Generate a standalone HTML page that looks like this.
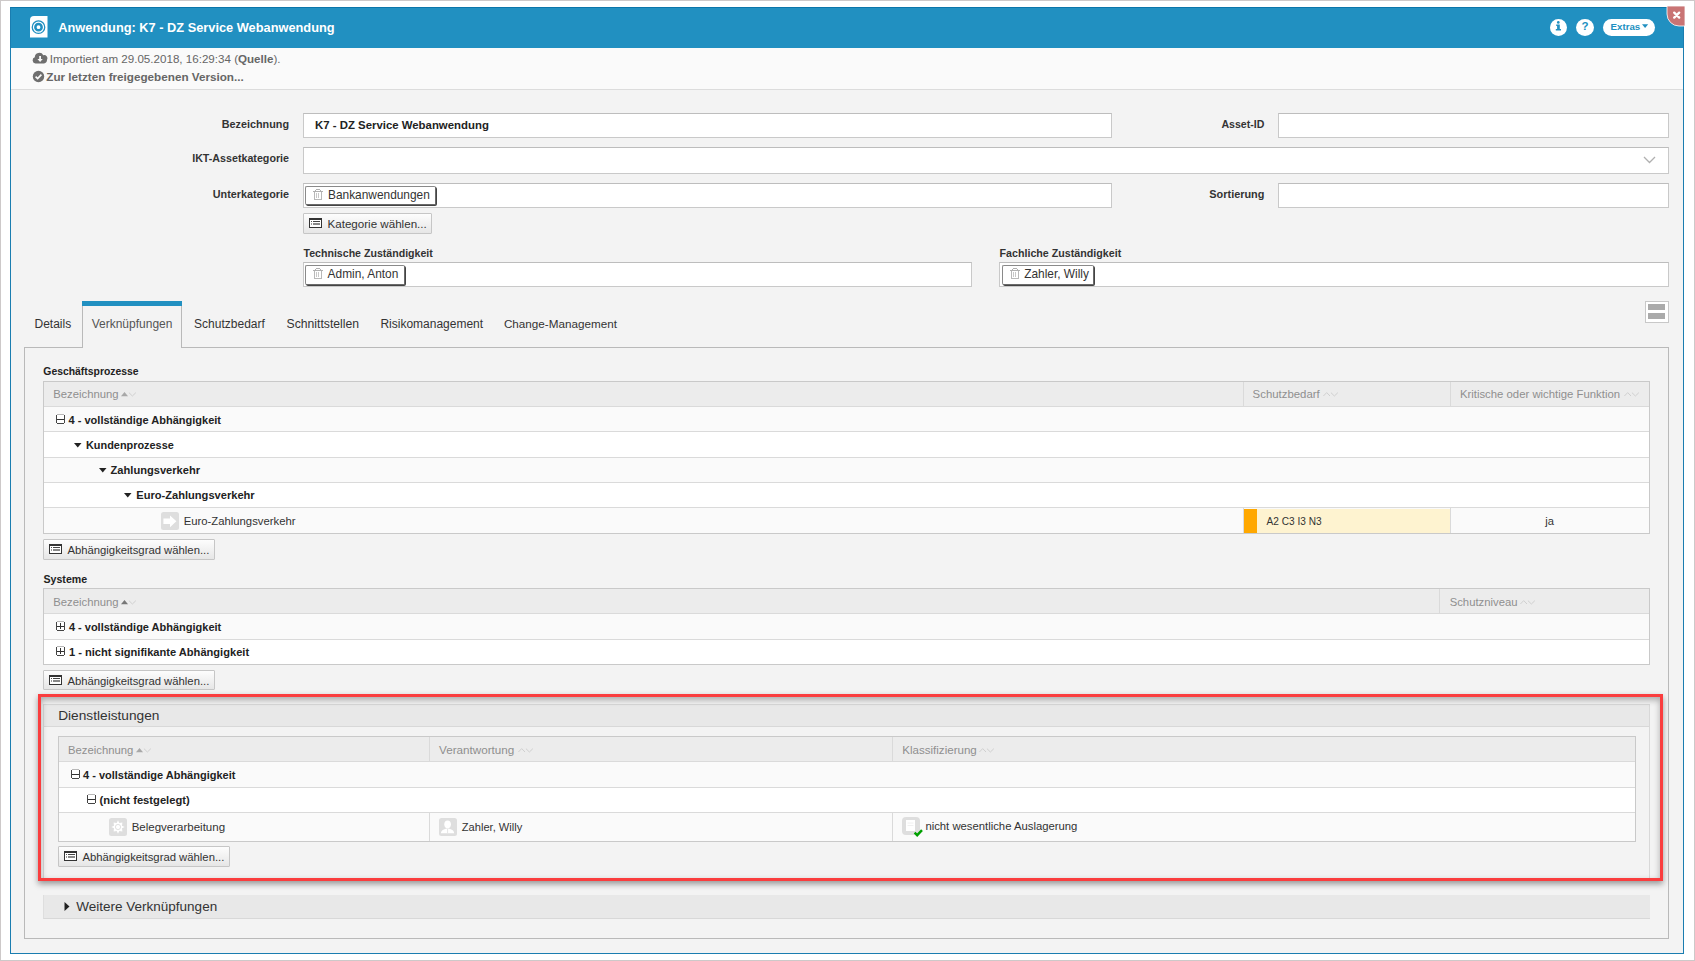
<!DOCTYPE html><html><head><meta charset="utf-8"><style>
*{margin:0;padding:0}
html,body{width:1695px;height:961px;overflow:hidden;background:#fff}
body{position:relative;font-family:"Liberation Sans",sans-serif}
body>div,body>svg{position:absolute;box-sizing:border-box}
.t{white-space:nowrap;line-height:normal}
.circ{width:18px;height:18px;border-radius:50%;background:#fff;color:#2190c1;font-weight:bold;font-size:12px;line-height:18px;text-align:center}
</style></head><body>
<div style="left:0px;top:0px;width:1695px;height:961px;border:1px solid #cdc9c9;background:#fff;"></div>
<div style="left:10px;top:7px;width:1674px;height:947px;border:1px solid #1a7db0;background:#f3f3f3;"></div>
<div style="left:10px;top:7px;width:1674px;height:41px;background:#2190c1;border-top:1px solid #0b76aa;border-left:1px solid #1a7db0;border-right:1px solid #1a7db0;"></div>
<svg style="left:30px;top:16px" width="18" height="22" viewBox="0 0 18 22">
<path d="M4 0 H17.5 V21.5 H0 V4 A4 4 0 0 1 4 0 Z" fill="#fff"/>
<circle cx="8.5" cy="11.2" r="6.25" fill="none" stroke="#2190c1" stroke-width="1.3"/>
<circle cx="8.5" cy="11.2" r="3.15" fill="none" stroke="#2190c1" stroke-width="2.5"/>
</svg>
<div class="t" style="left:58.3px;top:20px;font-size:12.8px;font-weight:bold;color:#fff;">Anwendung: K7 - DZ Service Webanwendung</div>
<svg style="left:1550px;top:19px" width="17" height="17" viewBox="0 0 17 17"><circle cx="8.5" cy="8.5" r="8.5" fill="#fff"/>
<circle cx="8.3" cy="3.4" r="1.35" fill="#2190c1"/><path d="M6.2 5.6 H9.8 V10.1 H11 V11.5 H5.8 V10.1 H7.1 V6.9 H6.2 Z" fill="#2190c1"/></svg>
<div class="circ" style="left:1576px;top:19px;width:18px;height:17px;line-height:15px;font-size:11.5px;">?</div>
<div style="left:1603px;top:19px;width:52px;height:17px;border-radius:8.5px;background:#fff;"></div>
<div class="t" style="left:1610.6px;top:21px;font-size:9.7px;font-weight:bold;color:#2190c1;">Extras</div>
<svg style="left:1642px;top:24px" width="7" height="5"><path d="M0 0.3 H6.2 L3.1 4 Z" fill="#2190c1"/></svg>
<svg style="left:1666px;top:5px" width="20" height="22" viewBox="0 0 20 22">
<path d="M1 1 H19 V21 H13 A12 12 0 0 1 1 9 Z" fill="#c97474" stroke="#fff" stroke-width="0.8"/>
<path d="M8.2 7.6 L13.2 12.6 M13.2 7.6 L8.2 12.6" stroke="#fff" stroke-width="2.3" stroke-linecap="round"/>
</svg>
<div style="left:11px;top:48px;width:1672px;height:42px;background:#fafafa;border-bottom:1px solid #dcdcdc;"></div>
<svg style="left:32px;top:52px" width="16" height="12" viewBox="0 0 16 12">
<path d="M3.5 11.5 A3.2 3.2 0 0 1 2.8 5.3 A4.5 4.5 0 0 1 11.3 3.2 A3.2 3.2 0 0 1 15 7.8 A3.6 3.6 0 0 1 12 11.5 Z" fill="#6f6f6f"/>
<path d="M7.2 4 H9 V7 H10.8 L8.1 10 L5.4 7 H7.2 Z" fill="#fafafa"/>
</svg>
<div class="t" style="left:49.8px;top:52px;font-size:11.6px;color:#666;">Importiert am 29.05.2018, 16:29:34 (<b>Quelle</b>).</div>
<svg style="left:32px;top:70px" width="13" height="13" viewBox="0 0 13 13">
<circle cx="6.5" cy="6.5" r="5.7" fill="#6f6f6f"/>
<path d="M3.6 6.6 L5.6 8.5 L9.4 4.6" fill="none" stroke="#fafafa" stroke-width="1.7"/>
</svg>
<div class="t" style="left:46.3px;top:70px;font-size:11.7px;font-weight:bold;color:#666;">Zur letzten freigegebenen Version...</div>
<div class="t" style="right:1406px;top:118px;font-size:10.8px;font-weight:bold;color:#333;">Bezeichnung</div>
<div style="left:303px;top:113px;width:809px;height:25px;background:#fff;border:1px solid #c9c9c9;border-top-color:#bdbdbd;"></div>
<div class="t" style="left:315px;top:119px;font-size:11.4px;font-weight:bold;color:#222;">K7 - DZ Service Webanwendung</div>
<div class="t" style="right:430.5999999999999px;top:118px;font-size:10.6px;font-weight:bold;color:#333;">Asset-ID</div>
<div style="left:1278px;top:113px;width:391px;height:25px;background:#fff;border:1px solid #c9c9c9;border-top-color:#bdbdbd;"></div>
<div class="t" style="right:1406px;top:152px;font-size:10.7px;font-weight:bold;color:#333;">IKT-Assetkategorie</div>
<div style="left:303px;top:147px;width:1366px;height:27px;background:#fff;border:1px solid #c9c9c9;border-top-color:#bdbdbd;"></div>
<svg style="left:1643px;top:156px" width="13" height="8"><path d="M1 1 L6.5 6.5 L12 1" fill="none" stroke="#b0b0b0" stroke-width="1.3"/></svg>
<div class="t" style="right:1406px;top:188px;font-size:10.8px;font-weight:bold;color:#333;">Unterkategorie</div>
<div style="left:303px;top:183px;width:809px;height:25px;background:#fff;border:1px solid #c9c9c9;border-top-color:#bdbdbd;"></div>
<div class="t" style="right:430.5999999999999px;top:188px;font-size:10.9px;font-weight:bold;color:#333;">Sortierung</div>
<div style="left:1278px;top:183px;width:391px;height:25px;background:#fff;border:1px solid #c9c9c9;border-top-color:#bdbdbd;"></div>
<div style="left:305px;top:186px;width:131px;height:19px;background:#fff;border:1px solid #6a6a6a;border-top-color:#8a8a8a;border-left-color:#8a8a8a;border-radius:2px;box-shadow:1px 1px 0 #444;"></div>
<svg style="left:313px;top:189px" width="10" height="11" viewBox="0 0 10 11" shape-rendering="crispEdges">
<rect x="3" y="0" width="4" height="1" fill="#b0b0b0"/>
<rect x="2" y="1" width="1" height="1" fill="#b0b0b0"/><rect x="7" y="1" width="1" height="1" fill="#b0b0b0"/>
<rect x="0" y="2" width="10" height="1" fill="#b0b0b0"/>
<rect x="1" y="3" width="1" height="8" fill="#b8b8b8"/><rect x="8" y="3" width="1" height="8" fill="#b8b8b8"/>
<rect x="1" y="10" width="8" height="1" fill="#b8b8b8"/>
<rect x="3" y="4" width="1" height="5" fill="#c8c8c8"/><rect x="5" y="4" width="1" height="5" fill="#c8c8c8"/>
</svg>
<div class="t" style="left:328px;top:188px;font-size:11.9px;color:#333;">Bankanwendungen</div>
<div style="left:303px;top:213px;width:129px;height:21px;background:linear-gradient(#fdfdfd,#e6e6e6);border:1px solid #c6c6c6;border-radius:1px;"></div>
<svg style="left:309px;top:218px" width="13" height="10" viewBox="0 0 13 10" shape-rendering="crispEdges">
<rect x="0" y="0" width="13" height="10" fill="#333"/>
<rect x="1" y="2" width="11" height="7" fill="#fff"/>
<rect x="2" y="3" width="1" height="1" fill="#555"/><rect x="4" y="3" width="7" height="1" fill="#444"/>
<rect x="2" y="5" width="1" height="2" fill="#999"/><rect x="4" y="5" width="7" height="2" fill="#888"/>
</svg>
<div class="t" style="left:327.5px;top:217px;font-size:11.6px;color:#333;">Kategorie wählen...</div>
<div class="t" style="left:303.5px;top:247px;font-size:10.6px;font-weight:bold;color:#333;">Technische Zuständigkeit</div>
<div style="left:303px;top:262px;width:669px;height:25px;background:#fff;border:1px solid #c9c9c9;border-top-color:#bdbdbd;"></div>
<div style="left:305px;top:265px;width:100px;height:20px;background:#fff;border:1px solid #6a6a6a;border-top-color:#8a8a8a;border-left-color:#8a8a8a;border-radius:2px;box-shadow:1px 1px 0 #444;"></div>
<svg style="left:313px;top:268px" width="10" height="11" viewBox="0 0 10 11" shape-rendering="crispEdges">
<rect x="3" y="0" width="4" height="1" fill="#b0b0b0"/>
<rect x="2" y="1" width="1" height="1" fill="#b0b0b0"/><rect x="7" y="1" width="1" height="1" fill="#b0b0b0"/>
<rect x="0" y="2" width="10" height="1" fill="#b0b0b0"/>
<rect x="1" y="3" width="1" height="8" fill="#b8b8b8"/><rect x="8" y="3" width="1" height="8" fill="#b8b8b8"/>
<rect x="1" y="10" width="8" height="1" fill="#b8b8b8"/>
<rect x="3" y="4" width="1" height="5" fill="#c8c8c8"/><rect x="5" y="4" width="1" height="5" fill="#c8c8c8"/>
</svg>
<div class="t" style="left:327.6px;top:267px;font-size:11.9px;color:#333;">Admin, Anton</div>
<div class="t" style="left:999.5px;top:247px;font-size:10.7px;font-weight:bold;color:#333;">Fachliche Zuständigkeit</div>
<div style="left:999px;top:262px;width:670px;height:25px;background:#fff;border:1px solid #c9c9c9;border-top-color:#bdbdbd;"></div>
<div style="left:1002px;top:265px;width:92px;height:20px;background:#fff;border:1px solid #6a6a6a;border-top-color:#8a8a8a;border-left-color:#8a8a8a;border-radius:2px;box-shadow:1px 1px 0 #444;"></div>
<svg style="left:1010px;top:268px" width="10" height="11" viewBox="0 0 10 11" shape-rendering="crispEdges">
<rect x="3" y="0" width="4" height="1" fill="#b0b0b0"/>
<rect x="2" y="1" width="1" height="1" fill="#b0b0b0"/><rect x="7" y="1" width="1" height="1" fill="#b0b0b0"/>
<rect x="0" y="2" width="10" height="1" fill="#b0b0b0"/>
<rect x="1" y="3" width="1" height="8" fill="#b8b8b8"/><rect x="8" y="3" width="1" height="8" fill="#b8b8b8"/>
<rect x="1" y="10" width="8" height="1" fill="#b8b8b8"/>
<rect x="3" y="4" width="1" height="5" fill="#c8c8c8"/><rect x="5" y="4" width="1" height="5" fill="#c8c8c8"/>
</svg>
<div class="t" style="left:1024.2px;top:267px;font-size:11.9px;color:#333;">Zahler, Willy</div>
<div style="left:24px;top:347px;width:1645px;height:592px;border:1px solid #b9b9b9;"></div>
<div style="left:82px;top:301px;width:100px;height:47px;border:1px solid #b9b9b9;border-bottom:none;background:#f3f3f3;"></div>
<div style="left:82px;top:301px;width:100px;height:5px;background:#2190c1;"></div>
<div class="t" style="left:34.5px;top:317px;font-size:12.0px;color:#333;">Details</div>
<div class="t" style="left:91.7px;top:317px;font-size:12.0px;color:#555;">Verknüpfungen</div>
<div class="t" style="left:194.1px;top:317px;font-size:12.0px;color:#333;">Schutzbedarf</div>
<div class="t" style="left:286.6px;top:317px;font-size:12.2px;color:#333;">Schnittstellen</div>
<div class="t" style="left:380.4px;top:317px;font-size:12.0px;color:#333;">Risikomanagement</div>
<div class="t" style="left:503.9px;top:317px;font-size:11.7px;color:#333;">Change-Management</div>
<div style="left:1645px;top:301px;width:24px;height:22px;background:#fff;border:1px solid #c8c8c8;"></div>
<div style="left:1648px;top:304px;width:17px;height:6px;background:#aaa;"></div>
<div style="left:1648px;top:313px;width:17px;height:6px;background:#aaa;"></div>
<div class="t" style="left:43.3px;top:366px;font-size:10.4px;font-weight:bold;color:#222;">Geschäftsprozesse</div>
<div style="left:43px;top:381px;width:1607px;height:153px;border:1px solid #c9c9c9;background:#fafafa;"></div>
<div style="left:44px;top:382px;width:1605px;height:25px;background:#ececec;border-bottom:1px solid #dadada;"></div>
<div style="left:1243px;top:382px;width:1px;height:25px;background:#dadada;"></div>
<div style="left:1450px;top:382px;width:1px;height:25px;background:#dadada;"></div>
<div class="t" style="left:53.3px;top:388px;font-size:11.3px;color:#8f8f8f;">Bezeichnung</div>
<svg style="left:121px;top:392px" width="16" height="6"><path d="M0 4.2 L3.5 0 L7 4.2 Z" fill="#a8a8a8"/><path d="M7.9 0.6 L11.4 4 L14.9 0.6" fill="none" stroke="#cfcfcf" stroke-width="1"/></svg>
<div class="t" style="left:1252.6px;top:388px;font-size:11.4px;color:#8f8f8f;">Schutzbedarf</div>
<svg style="left:1323.4px;top:392px" width="16" height="6"><path d="M0.4 4 L3.7 0.6 L7 4" fill="none" stroke="#cfcfcf" stroke-width="1"/><path d="M7.9 0.6 L11.4 4 L14.9 0.6" fill="none" stroke="#cfcfcf" stroke-width="1"/></svg>
<div class="t" style="left:1459.9px;top:388px;font-size:11.35px;color:#8f8f8f;">Kritische oder wichtige Funktion</div>
<svg style="left:1624px;top:392px" width="16" height="6"><path d="M0.4 4 L3.7 0.6 L7 4" fill="none" stroke="#cfcfcf" stroke-width="1"/><path d="M7.9 0.6 L11.4 4 L14.9 0.6" fill="none" stroke="#cfcfcf" stroke-width="1"/></svg>
<div style="left:44px;top:407px;width:1605px;height:24px;background:#fafafa;"></div>
<div style="left:44px;top:431px;width:1605px;height:1px;background:#dadada;"></div>
<div style="left:44px;top:432px;width:1605px;height:25px;background:#fff;"></div>
<div style="left:44px;top:457px;width:1605px;height:1px;background:#dadada;"></div>
<div style="left:44px;top:458px;width:1605px;height:24px;background:#fafafa;"></div>
<div style="left:44px;top:482px;width:1605px;height:1px;background:#dadada;"></div>
<div style="left:44px;top:483px;width:1605px;height:24px;background:#fff;"></div>
<div style="left:44px;top:507px;width:1605px;height:1px;background:#dadada;"></div>
<div style="left:44px;top:508px;width:1605px;height:25px;background:#fafafa;"></div>
<svg style="left:56px;top:414px" width="9" height="10" shape-rendering="crispEdges"><rect x="1" y="1" width="7" height="8" fill="#fff"/><rect x="1" y="0" width="7" height="1" fill="#b8b8b8"/><rect x="0" y="1" width="1" height="8" fill="#444"/><rect x="8" y="1" width="1" height="8" fill="#444"/><rect x="1" y="9" width="7" height="1" fill="#444"/><rect x="1" y="5" width="7" height="1" fill="#333"/></svg>
<div class="t" style="left:68.6px;top:414px;font-size:11.0px;font-weight:bold;color:#222;">4 - vollständige Abhängigkeit</div>
<svg style="left:74px;top:443px" width="8" height="5"><path d="M0 0 H7.5 L3.75 4.5 Z" fill="#222"/></svg>
<div class="t" style="left:86px;top:439px;font-size:10.9px;font-weight:bold;color:#222;">Kundenprozesse</div>
<svg style="left:99px;top:468px" width="8" height="5"><path d="M0 0 H7.5 L3.75 4.5 Z" fill="#222"/></svg>
<div class="t" style="left:110.6px;top:464px;font-size:11.1px;font-weight:bold;color:#222;">Zahlungsverkehr</div>
<svg style="left:124px;top:493px" width="8" height="5"><path d="M0 0 H7.5 L3.75 4.5 Z" fill="#222"/></svg>
<div class="t" style="left:136.3px;top:489px;font-size:11.1px;font-weight:bold;color:#222;">Euro-Zahlungsverkehr</div>
<svg style="left:161px;top:512px" width="18" height="18" viewBox="0 0 18 18">
<rect width="18" height="18" rx="2.5" fill="#dedede"/>
<path d="M2.4 6.6 H9 V3.4 L15.4 9.3 L9 15.2 V12 H2.4 Z" fill="#fff"/>
</svg>
<div class="t" style="left:183.7px;top:515px;font-size:11.3px;color:#333;">Euro-Zahlungsverkehr</div>
<div style="left:1243px;top:508px;width:1px;height:25px;background:#dadada;"></div>
<div style="left:1450px;top:508px;width:1px;height:25px;background:#dadada;"></div>
<div style="left:1244px;top:509px;width:13px;height:24px;background:#ffa800;"></div>
<div style="left:1257px;top:509px;width:193px;height:24px;background:#fef3d0;"></div>
<div class="t" style="left:1266.6px;top:516px;font-size:10.1px;color:#333;">A2 C3 I3 N3</div>
<div class="t" style="left:1249.5px;width:600px;text-align:center;top:515px;font-size:11.2px;color:#333;">ja</div>
<div style="left:43px;top:539px;width:172px;height:21px;background:linear-gradient(#fdfdfd,#e6e6e6);border:1px solid #c6c6c6;border-radius:1px;"></div>
<svg style="left:49px;top:544px" width="13" height="10" viewBox="0 0 13 10" shape-rendering="crispEdges">
<rect x="0" y="0" width="13" height="10" fill="#333"/>
<rect x="1" y="2" width="11" height="7" fill="#fff"/>
<rect x="2" y="3" width="1" height="1" fill="#555"/><rect x="4" y="3" width="7" height="1" fill="#444"/>
<rect x="2" y="5" width="1" height="2" fill="#999"/><rect x="4" y="5" width="7" height="2" fill="#888"/>
</svg>
<div class="t" style="left:67.4px;top:544px;font-size:11.3px;color:#333;">Abhängigkeitsgrad wählen...</div>
<div class="t" style="left:43.5px;top:573px;font-size:10.6px;font-weight:bold;color:#222;">Systeme</div>
<div style="left:43px;top:588px;width:1607px;height:77px;border:1px solid #c9c9c9;background:#fafafa;"></div>
<div style="left:44px;top:589px;width:1605px;height:25px;background:#ececec;border-bottom:1px solid #dadada;"></div>
<div style="left:1439px;top:589px;width:1px;height:25px;background:#dadada;"></div>
<div class="t" style="left:53.3px;top:596px;font-size:11.3px;color:#8f8f8f;">Bezeichnung</div>
<svg style="left:121px;top:600px" width="16" height="6"><path d="M0 4.2 L3.5 0 L7 4.2 Z" fill="#777"/><path d="M7.9 0.6 L11.4 4 L14.9 0.6" fill="none" stroke="#cfcfcf" stroke-width="1"/></svg>
<div class="t" style="left:1449.7px;top:596px;font-size:11.3px;color:#8f8f8f;">Schutzniveau</div>
<svg style="left:1520px;top:600px" width="16" height="6"><path d="M0.4 4 L3.7 0.6 L7 4" fill="none" stroke="#cfcfcf" stroke-width="1"/><path d="M7.9 0.6 L11.4 4 L14.9 0.6" fill="none" stroke="#cfcfcf" stroke-width="1"/></svg>
<div style="left:44px;top:614px;width:1605px;height:25px;background:#fafafa;"></div>
<div style="left:44px;top:639px;width:1605px;height:1px;background:#dadada;"></div>
<div style="left:44px;top:640px;width:1605px;height:24px;background:#fff;"></div>
<svg style="left:56px;top:621px" width="9" height="10" shape-rendering="crispEdges"><rect x="1" y="1" width="7" height="8" fill="#fff"/><rect x="1" y="0" width="7" height="1" fill="#b8b8b8"/><rect x="0" y="1" width="1" height="8" fill="#444"/><rect x="8" y="1" width="1" height="8" fill="#444"/><rect x="1" y="9" width="7" height="1" fill="#444"/><rect x="1" y="5" width="7" height="1" fill="#333"/><rect x="4" y="2" width="1" height="6" fill="#333"/></svg>
<div class="t" style="left:68.9px;top:621px;font-size:11.0px;font-weight:bold;color:#222;">4 - vollständige Abhängigkeit</div>
<svg style="left:56px;top:646px" width="9" height="10" shape-rendering="crispEdges"><rect x="1" y="1" width="7" height="8" fill="#fff"/><rect x="1" y="0" width="7" height="1" fill="#b8b8b8"/><rect x="0" y="1" width="1" height="8" fill="#444"/><rect x="8" y="1" width="1" height="8" fill="#444"/><rect x="1" y="9" width="7" height="1" fill="#444"/><rect x="1" y="5" width="7" height="1" fill="#333"/><rect x="4" y="2" width="1" height="6" fill="#333"/></svg>
<div class="t" style="left:68.9px;top:646px;font-size:11.1px;font-weight:bold;color:#222;">1 - nicht signifikante Abhängigkeit</div>
<div style="left:43px;top:670px;width:172px;height:20px;background:linear-gradient(#fdfdfd,#e6e6e6);border:1px solid #c6c6c6;border-radius:1px;"></div>
<svg style="left:49px;top:675px" width="13" height="10" viewBox="0 0 13 10" shape-rendering="crispEdges">
<rect x="0" y="0" width="13" height="10" fill="#333"/>
<rect x="1" y="2" width="11" height="7" fill="#fff"/>
<rect x="2" y="3" width="1" height="1" fill="#555"/><rect x="4" y="3" width="7" height="1" fill="#444"/>
<rect x="2" y="5" width="1" height="2" fill="#999"/><rect x="4" y="5" width="7" height="2" fill="#888"/>
</svg>
<div class="t" style="left:67.4px;top:675px;font-size:11.3px;color:#333;">Abhängigkeitsgrad wählen...</div>
<div style="left:43px;top:704px;width:1607px;height:175px;border:1px solid #d8d8d8;background:#f3f3f3;"></div>
<div style="left:44px;top:705px;width:1605px;height:22px;background:#e8e8e8;border-bottom:1px solid #d8d8d8;"></div>
<div class="t" style="left:58.2px;top:708px;font-size:13.7px;color:#333;">Dienstleistungen</div>
<div style="left:58px;top:736px;width:1578px;height:106px;border:1px solid #c9c9c9;background:#fafafa;"></div>
<div style="left:59px;top:737px;width:1576px;height:25px;background:#ececec;border-bottom:1px solid #dadada;"></div>
<div style="left:429px;top:737px;width:1px;height:25px;background:#dadada;"></div>
<div style="left:892px;top:737px;width:1px;height:25px;background:#dadada;"></div>
<div class="t" style="left:68px;top:744px;font-size:11.3px;color:#8f8f8f;">Bezeichnung</div>
<svg style="left:135.8px;top:748px" width="16" height="6"><path d="M0 4.2 L3.5 0 L7 4.2 Z" fill="#a8a8a8"/><path d="M7.9 0.6 L11.4 4 L14.9 0.6" fill="none" stroke="#cfcfcf" stroke-width="1"/></svg>
<div class="t" style="left:439px;top:743px;font-size:11.7px;color:#8f8f8f;">Verantwortung</div>
<svg style="left:518px;top:748px" width="16" height="6"><path d="M0.4 4 L3.7 0.6 L7 4" fill="none" stroke="#cfcfcf" stroke-width="1"/><path d="M7.9 0.6 L11.4 4 L14.9 0.6" fill="none" stroke="#cfcfcf" stroke-width="1"/></svg>
<div class="t" style="left:902.3px;top:744px;font-size:11.55px;color:#8f8f8f;">Klassifizierung</div>
<svg style="left:979.2px;top:748px" width="16" height="6"><path d="M0.4 4 L3.7 0.6 L7 4" fill="none" stroke="#cfcfcf" stroke-width="1"/><path d="M7.9 0.6 L11.4 4 L14.9 0.6" fill="none" stroke="#cfcfcf" stroke-width="1"/></svg>
<div style="left:59px;top:762px;width:1576px;height:25px;background:#fafafa;"></div>
<div style="left:59px;top:787px;width:1576px;height:1px;background:#dadada;"></div>
<div style="left:59px;top:788px;width:1576px;height:24px;background:#fff;"></div>
<div style="left:59px;top:812px;width:1576px;height:1px;background:#dadada;"></div>
<div style="left:59px;top:813px;width:1576px;height:28px;background:#fafafa;"></div>
<div style="left:429px;top:813px;width:1px;height:28px;background:#dadada;"></div>
<div style="left:892px;top:813px;width:1px;height:28px;background:#dadada;"></div>
<svg style="left:71px;top:769px" width="9" height="10" shape-rendering="crispEdges"><rect x="1" y="1" width="7" height="8" fill="#fff"/><rect x="1" y="0" width="7" height="1" fill="#b8b8b8"/><rect x="0" y="1" width="1" height="8" fill="#444"/><rect x="8" y="1" width="1" height="8" fill="#444"/><rect x="1" y="9" width="7" height="1" fill="#444"/><rect x="1" y="5" width="7" height="1" fill="#333"/></svg>
<div class="t" style="left:83px;top:769px;font-size:11.0px;font-weight:bold;color:#222;">4 - vollständige Abhängigkeit</div>
<svg style="left:87px;top:794px" width="9" height="10" shape-rendering="crispEdges"><rect x="1" y="1" width="7" height="8" fill="#fff"/><rect x="1" y="0" width="7" height="1" fill="#b8b8b8"/><rect x="0" y="1" width="1" height="8" fill="#444"/><rect x="8" y="1" width="1" height="8" fill="#444"/><rect x="1" y="9" width="7" height="1" fill="#444"/><rect x="1" y="5" width="7" height="1" fill="#333"/></svg>
<div class="t" style="left:99.6px;top:794px;font-size:11.2px;font-weight:bold;color:#222;">(nicht festgelegt)</div>
<svg style="left:109px;top:818px" width="18" height="18" viewBox="0 0 18 18">
<rect width="18" height="18" rx="2.5" fill="#dedede"/>
<path d="M9 2.3 L10.3 5 L13.4 4.6 L13 7.7 L15.7 9 L13 10.3 L13.4 13.4 L10.3 13 L9 15.7 L7.7 13 L4.6 13.4 L5 10.3 L2.3 9 L5 7.7 L4.6 4.6 L7.7 5 Z" fill="#fff"/>
<circle cx="9" cy="9" r="4.2" fill="#fff"/>
<circle cx="9" cy="9" r="2.6" fill="none" stroke="#dedede" stroke-width="0.9"/>
</svg>
<div class="t" style="left:131.7px;top:821px;font-size:11.5px;color:#333;">Belegverarbeitung</div>
<svg style="left:439px;top:818px" width="18" height="18" viewBox="0 0 18 18">
<rect width="18" height="18" rx="2.5" fill="#dedede"/>
<ellipse cx="8.6" cy="6.3" rx="3.3" ry="3.9" fill="#fff"/>
<path d="M1.8 15.2 Q2.5 11.8 6.8 10.8 L8.6 10.3 L10.4 10.8 Q14.7 11.8 15.2 15.2 Z" fill="#fff"/>
<path d="M8.6 10.5 V15.2" stroke="#dedede" stroke-width="0.8"/>
</svg>
<div class="t" style="left:461.8px;top:821px;font-size:11.1px;color:#333;">Zahler, Willy</div>
<svg style="left:902px;top:817px" width="22" height="20" viewBox="0 0 22 20">
<rect x="0" y="0" width="18" height="18" rx="4" fill="#dedede"/>
<rect x="4" y="3" width="9" height="11" fill="#fff"/>
<path d="M5.5 6 H11.5 M5.5 8.5 H11.5" stroke="#f0f0f0" stroke-width="1"/>
<path d="M12.6 15.6 L15.2 18.2 L20 13.2" fill="none" stroke="#00a000" stroke-width="2.4"/>
</svg>
<div class="t" style="left:925.4px;top:820px;font-size:11.3px;color:#333;">nicht wesentliche Auslagerung</div>
<div style="left:58px;top:846px;width:172px;height:21px;background:linear-gradient(#fdfdfd,#e6e6e6);border:1px solid #c6c6c6;border-radius:1px;"></div>
<svg style="left:64px;top:851px" width="13" height="10" viewBox="0 0 13 10" shape-rendering="crispEdges">
<rect x="0" y="0" width="13" height="10" fill="#333"/>
<rect x="1" y="2" width="11" height="7" fill="#fff"/>
<rect x="2" y="3" width="1" height="1" fill="#555"/><rect x="4" y="3" width="7" height="1" fill="#444"/>
<rect x="2" y="5" width="1" height="2" fill="#999"/><rect x="4" y="5" width="7" height="2" fill="#888"/>
</svg>
<div class="t" style="left:82.4px;top:851px;font-size:11.3px;color:#333;">Abhängigkeitsgrad wählen...</div>
<div style="left:38px;top:694px;width:1625px;height:187px;box-sizing:border-box;border:3px solid #fa3d3e;box-shadow:0 3px 6px rgba(0,0,0,0.38), inset 0 3px 6px rgba(0,0,0,0.3);"></div>
<div style="left:43px;top:895px;width:1607px;height:24px;background:#e8e8e8;border-bottom:1px solid #d8d8d8;border-left:1px solid #dedede;"></div>
<svg style="left:64px;top:902px" width="6" height="9"><path d="M0.5 0 L5.5 4.5 L0.5 9 Z" fill="#222"/></svg>
<div class="t" style="left:76.3px;top:899px;font-size:13.5px;color:#333;">Weitere Verknüpfungen</div>
</body></html>
